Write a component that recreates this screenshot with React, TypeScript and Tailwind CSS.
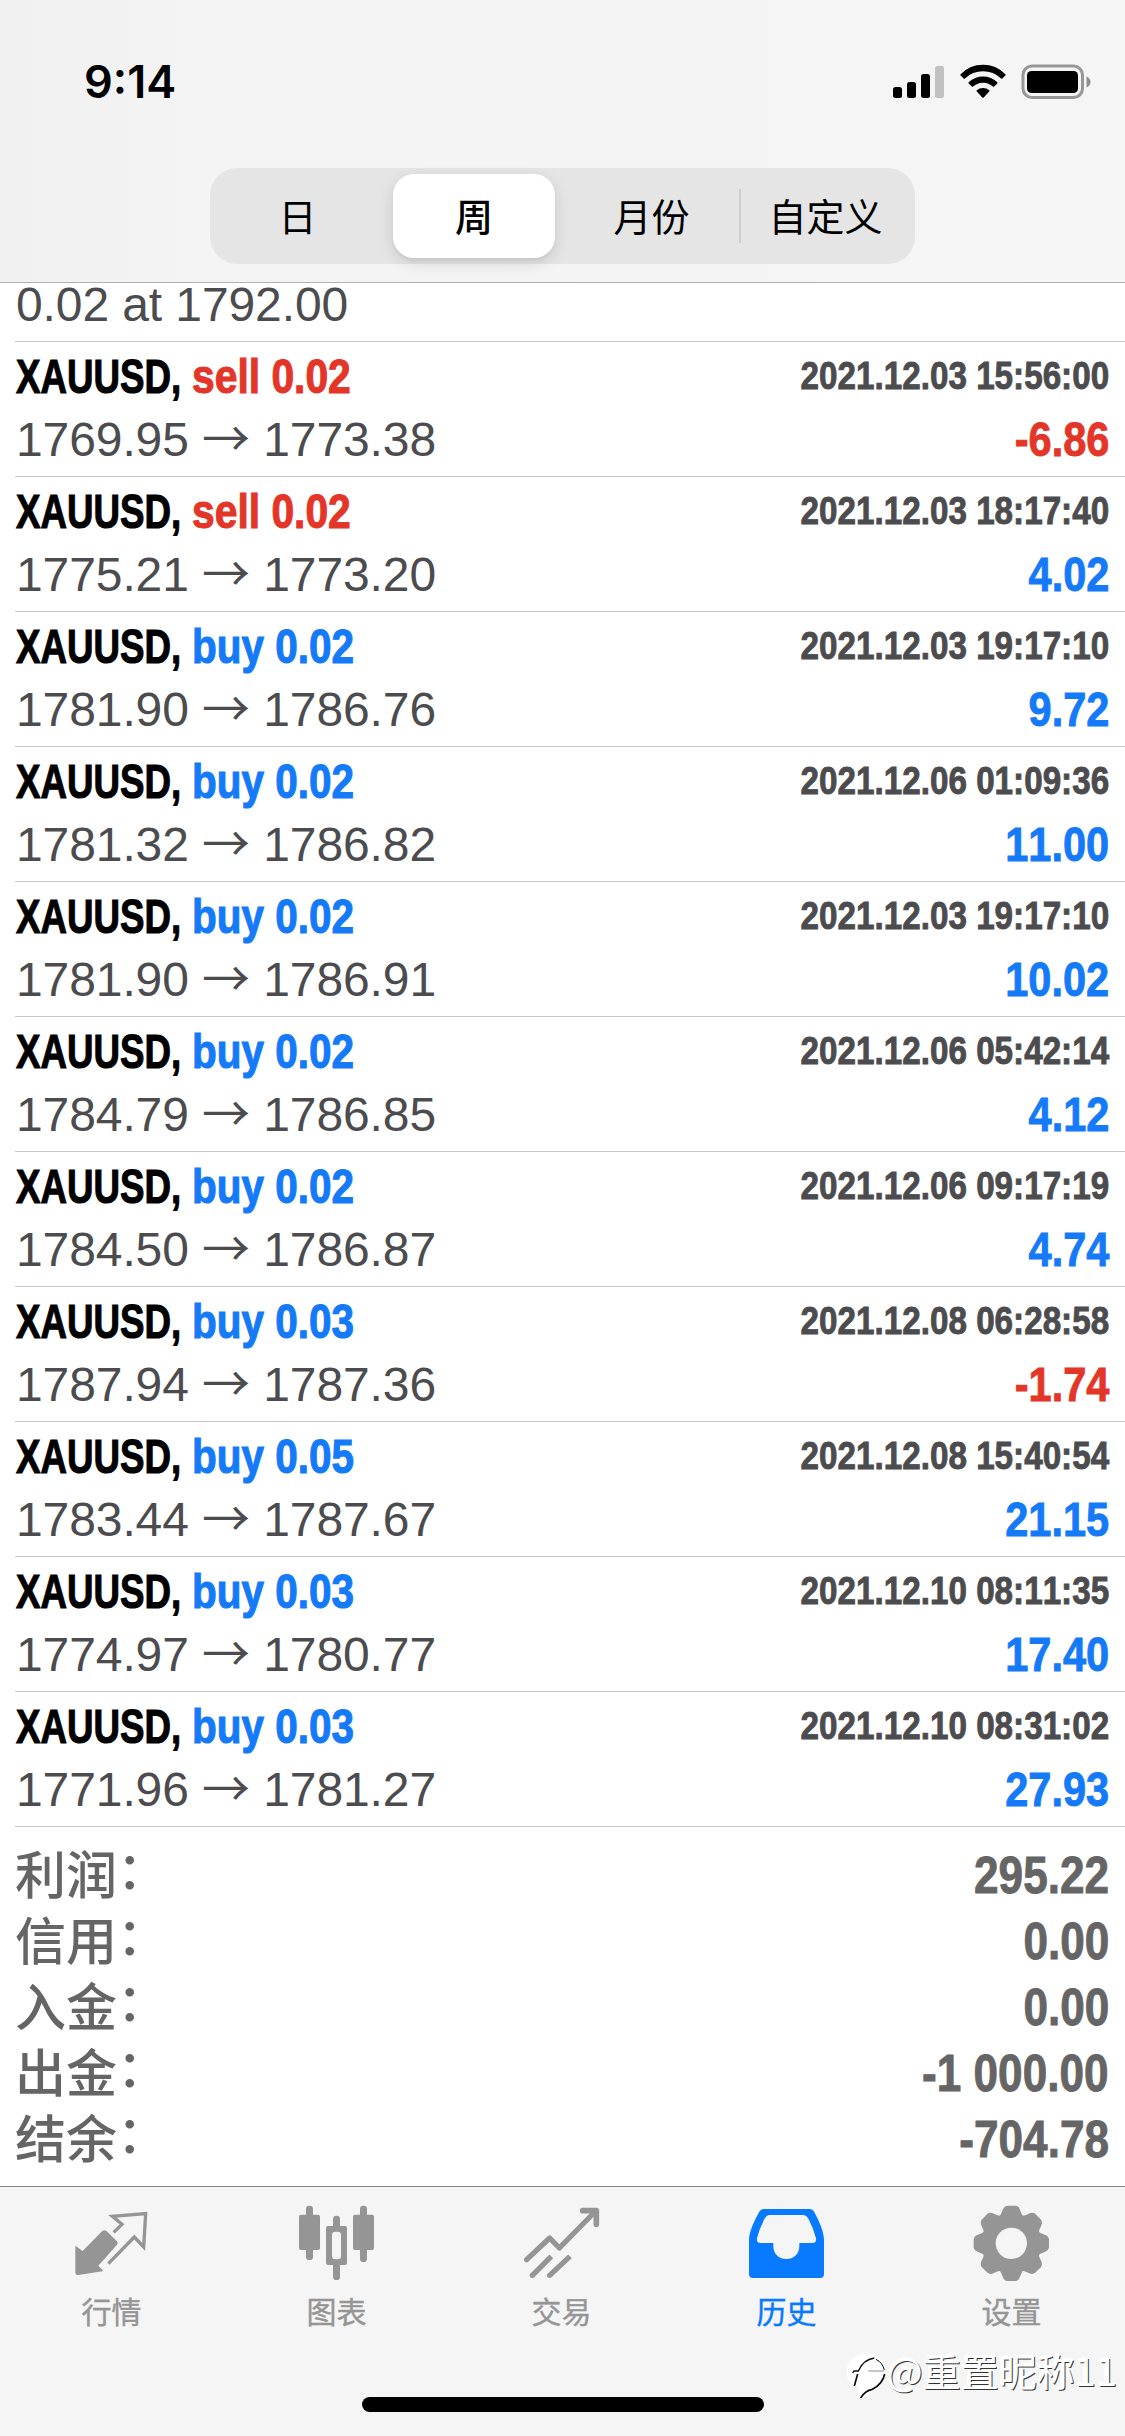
import React from 'react';
import { clsx } from 'clsx';

type Side = 'buy' | 'sell';

interface Deal {
  side: Side;
  volume: string;
  open: string;
  close: string;
  time: string;
  profit: string;
}

const DEALS: Deal[] = [
  { side: 'sell', volume: '0.02', open: '1769.95', close: '1773.38', time: '2021.12.03 15:56:00', profit: '-6.86' },
  { side: 'sell', volume: '0.02', open: '1775.21', close: '1773.20', time: '2021.12.03 18:17:40', profit: '4.02' },
  { side: 'buy', volume: '0.02', open: '1781.90', close: '1786.76', time: '2021.12.03 19:17:10', profit: '9.72' },
  { side: 'buy', volume: '0.02', open: '1781.32', close: '1786.82', time: '2021.12.06 01:09:36', profit: '11.00' },
  { side: 'buy', volume: '0.02', open: '1781.90', close: '1786.91', time: '2021.12.03 19:17:10', profit: '10.02' },
  { side: 'buy', volume: '0.02', open: '1784.79', close: '1786.85', time: '2021.12.06 05:42:14', profit: '4.12' },
  { side: 'buy', volume: '0.02', open: '1784.50', close: '1786.87', time: '2021.12.06 09:17:19', profit: '4.74' },
  { side: 'buy', volume: '0.03', open: '1787.94', close: '1787.36', time: '2021.12.08 06:28:58', profit: '-1.74' },
  { side: 'buy', volume: '0.05', open: '1783.44', close: '1787.67', time: '2021.12.08 15:40:54', profit: '21.15' },
  { side: 'buy', volume: '0.03', open: '1774.97', close: '1780.77', time: '2021.12.10 08:11:35', profit: '17.40' },
  { side: 'buy', volume: '0.03', open: '1771.96', close: '1781.27', time: '2021.12.10 08:31:02', profit: '27.93' },
];

const SUMMARY = [
  { label: '利润', value: '295.22' },
  { label: '信用', value: '0.00' },
  { label: '入金', value: '0.00' },
  { label: '出金', value: '-1 000.00' },
  { label: '结余', value: '-704.78' },
];

const PERIODS = ['日', '周', '月份', '自定义'];

function StatusBar() {
  return (
    <div className="flex h-[168px] items-start justify-between pl-[84px] pr-[33px] pt-[56px]">
      <span className="font-['Inter'] text-[45px] font-semibold leading-[52px] text-black">9:14</span>
      <div className="flex pt-[8px]">
        <svg className="h-[36px] w-[52px]" viewBox="0 0 52 36">
          <rect x="0" y="23" width="9" height="11" rx="2.5" />
          <rect x="14" y="18" width="9" height="16" rx="2.5" />
          <rect x="28" y="10" width="9" height="24" rx="2.5" />
          <rect x="42" y="2" width="9" height="32" rx="2.5" fill="#c1c1c1" />
        </svg>
        <svg className="ml-[15px] h-[36px] w-[46px]" viewBox="0 0 46 36">
          <path d="M0.6 10.2 Q10 0.8 23 0.8 Q36 0.8 45.4 10.2 Q46 10.8 45.4 11.4 L42.4 14.4 Q41.8 15 41.1 14.4 Q33.5 7.2 23 7.2 Q12.5 7.2 4.9 14.4 Q4.2 15 3.6 14.4 L0.6 11.4 Q0 10.8 0.6 10.2 Z" />
          <path d="M8.7 18.2 Q14.7 12.4 23 12.4 Q31.3 12.4 37.3 18.2 Q37.9 18.8 37.3 19.4 L34.2 22.5 Q33.6 23.1 32.9 22.5 Q28.7 18.7 23 18.7 Q17.3 18.7 13.1 22.5 Q12.4 23.1 11.8 22.5 L8.7 19.4 Q8.1 18.8 8.7 18.2 Z" />
          <path d="M16.8 26.3 Q19.4 24 23 24 Q26.6 24 29.2 26.3 Q29.8 26.9 29.2 27.5 L23.7 33.5 Q23 34.2 22.3 33.5 L16.8 27.5 Q16.2 26.9 16.8 26.3 Z" />
        </svg>
        <svg className="ml-[15px] h-[36px] w-[71px]" viewBox="0 0 71 36">
          <rect x="2" y="2" width="59.5" height="31.5" rx="9" fill="none" stroke="#979797" strokeWidth="3" />
          <rect x="6" y="7" width="51" height="22" rx="4.5" />
          <path d="M65.5 12.5 Q69.5 14.5 69.5 18 Q69.5 21.5 65.5 23.5 Z" fill="#8e8e8e" />
        </svg>
      </div>
    </div>
  );
}

function PeriodSwitch({ active }: { active: string }) {
  return (
    <div className="ml-[210px] flex h-[96px] w-[705px] rounded-[27px] bg-[#e5e5e6] py-[6px] font-['Noto_Sans_CJK_SC',sans-serif]">
      {PERIODS.map((period) => (
        <div key={period} className={clsx('relative flex w-[176px] px-[7px]', period === '月份' && 'pl-[11px]')}>
          {period === '自定义' && <div className="absolute left-[1px] top-[15px] h-[54px] w-[2px] bg-[#cfcfd1]" />}
          <button
            className={clsx(
              'flex flex-1 items-center justify-center whitespace-nowrap pb-[3px] text-[38px] leading-none text-black',
              period === active
                ? 'rounded-[21px] bg-white font-medium shadow-[0_5px_16px_rgba(0,0,0,0.12),0_3px_3px_rgba(0,0,0,0.04)]'
                : 'pr-[1px]',
            )}
          >
            {period}
          </button>
        </div>
      ))}
    </div>
  );
}

function DealRow({ deal }: { deal: Deal }) {
  const loss = deal.profit.startsWith('-');
  return (
    <div className="ml-[15px] flex h-[135px] justify-between border-b border-[#c6c6c8] pr-[16px]">
      <div className="whitespace-nowrap">
        <div className="flex pl-px text-[48px] font-bold leading-[69px] [-webkit-text-stroke:1.1px_currentColor]">
          <span className="w-[176px] origin-left scale-x-[0.765] text-black">XAUUSD,</span>
          <span
            className={clsx(
              'origin-left',
              deal.side === 'sell' ? 'scale-x-[0.85] text-[#e33629]' : 'scale-x-[0.843] text-[#147af8]',
            )}
          >
            {deal.side} {deal.volume}
          </span>
        </div>
        <div className="pl-px text-[48px] leading-[57px] tracking-[-0.1px] text-[#4c4c4f]">
          {deal.open} <span className="font-['Noto_Sans_CJK_SC',sans-serif] leading-none">→</span> {deal.close}
        </div>
      </div>
      <div className="flex flex-col items-end whitespace-nowrap font-bold [-webkit-text-stroke:0.9px_currentColor] [font-kerning:none]">
        <div className="h-[69px] origin-right scale-x-[0.852] text-[39px] leading-[67px] text-[#4c4c4f]">{deal.time}</div>
        <div
          className={clsx(
            'origin-right scale-x-[0.865] text-[48px] leading-[57px]',
            loss ? 'text-[#e33629]' : 'text-[#147af8]',
          )}
        >
          {deal.profit}
        </div>
      </div>
    </div>
  );
}

function Summary() {
  return (
    <div className="h-[359px] pl-[15px] pr-[16px] pt-[16px] text-[#656565]">
      {SUMMARY.map((row) => (
        <div key={row.label} className="flex h-[66px] justify-between whitespace-nowrap text-[51px] leading-[66px]">
          <span className="flex font-['Noto_Sans_CJK_SC',sans-serif] font-medium leading-[58px]">
            {row.label}
            <span className="leading-[49px]">：</span>
          </span>
          <span className="origin-right scale-x-[0.865] font-bold [-webkit-text-stroke:0.9px_currentColor]">{row.value}</span>
        </div>
      ))}
    </div>
  );
}

function QuotesIcon() {
  return (
    <>
      <path d="M116 82 L141 58 L112 34 L212 26 L206 126 L178 96 L100 176" fill="none" stroke="currentColor" strokeWidth="10" />
      <path d="M1 122 L23 138 L81 79 Q88 72 95 79 L126 109 Q130 114 126 119 L70 182 L83 195 L82 199 L10 210 Q1 211 1 202 Z" />
    </>
  );
}

function ChartIcon() {
  return (
    <>
      <rect x="-3" y="29" width="63" height="106" rx="6" />
      <rect x="18" y="2" width="21" height="163" rx="10" />
      <rect x="159" y="29" width="63" height="106" rx="6" />
      <rect x="180" y="2" width="21" height="169" rx="10" />
      <rect x="78" y="63" width="63" height="117" rx="6" />
      <rect x="99" y="32" width="21" height="193" rx="10" />
      <rect x="96" y="80" width="27" height="83" rx="10" fill="#f5f5f5" />
    </>
  );
}

function TradeIcon() {
  return (
    <>
      <g fill="none" stroke="currentColor" strokeWidth="16">
        <path d="M5 164 L74 99 L103 129 L212 18" strokeLinecap="round" strokeLinejoin="round" />
        <path d="M173 17 H214 V58" strokeWidth="17" strokeLinecap="round" strokeLinejoin="round" />
        <path d="M22 211 L79 154 M74 211 L135 154" />
      </g>
      <circle cx="22" cy="211" r="8" />
      <circle cx="74" cy="211" r="8" />
    </>
  );
}

function HistoryIcon() {
  return (
    <path
      fillRule="evenodd"
      d="M42 12 H178 Q188 12 193 22 C208 50 222 80 222 105 V207 Q222 219 210 219 H9 Q-3 219 -3 207 V105 C-3 80 12 50 27 22 Q32 12 42 12 Z M60 30 Q49 30 43 43 Q28 70 21 100 Q19 114 32 114 H70 V123 C70 148 87 162 109 162 C131 162 148 148 148 123 V114 H188 Q200 114 198 100 Q190 70 176 43 Q170 30 158 30 Z"
    />
  );
}

function SettingsIcon() {
  return (
    <g transform="translate(109 115)">
      <circle r="88" />
      {[0, 45, 90, 135, 180, 225, 270, 315].map((angle) => (
        <path
          key={angle}
          transform={`rotate(${angle})`}
          d="M-38 -78 Q-30 -86 -26 -100 Q-22 -112 -12 -113 H12 Q22 -112 26 -100 Q30 -86 38 -78 Z"
        />
      ))}
      <circle r="47" fill="#f5f5f5" />
    </g>
  );
}

const TABS = [
  { label: '行情', Icon: QuotesIcon },
  { label: '图表', Icon: ChartIcon },
  { label: '交易', Icon: TradeIcon },
  { label: '历史', Icon: HistoryIcon },
  { label: '设置', Icon: SettingsIcon },
];

function TabBar({ active }: { active: string }) {
  return (
    <nav className="flex h-[250px] flex-col items-center border-t border-[#868686] bg-[#f5f5f5]">
      <div className="grid h-[210px] w-full grid-cols-5 pt-[18px]">
        {TABS.map(({ label, Icon }) => (
          <div
            key={label}
            className={clsx('flex flex-col items-center', label === active ? 'text-[#087aff]' : 'text-[#959595]')}
          >
            <svg className="h-[78px] w-[75px] overflow-visible" viewBox="0 0 225 234" fill="currentColor">
              <Icon />
            </svg>
            <span className="mt-[6px] pr-[2px] font-['Noto_Sans_CJK_SC',sans-serif] text-[30px] leading-[42px] [-webkit-text-stroke:0.4px_currentColor]">
              {label}
            </span>
          </div>
        ))}
      </div>
      <div className="h-[15px] w-[402px] rounded-full bg-black" />
    </nav>
  );
}

function Watermark() {
  return (
    <div className="absolute bottom-[38px] right-[8px] flex items-start">
      <svg className="h-[46px] w-[42px]" viewBox="0 0 126 138">
        <path d="M62 5 C30 5 5 27 5 60 C5 82 18 98 40 106 L46 140 C85 125 118 95 121 58 C121 28 95 5 62 5 Z" fill="#fff" />
        <g fill="none" stroke="#0a0a0a">
          <path d="M23 63 L27 57 H40 Q54 23 88 18" strokeWidth="4" />
          <path d="M38 66 L28 102" strokeWidth="5" />
          <path d="M70 57 H117" strokeWidth="2" stroke="#555" />
          <path d="M93 22 Q113 32 118 54" strokeWidth="3" />
          <path d="M119 66 Q113 96 82 112 Q60 116 47 138" strokeWidth="5" />
        </g>
      </svg>
      <span className="font-['Noto_Sans_CJK_SC',sans-serif] text-[38px] leading-[36px] text-white [text-shadow:1px_1px_0_#333,-1px_-1px_0_#fff]">
        @重置昵称11
      </span>
    </div>
  );
}

export default function App() {
  return (
    <div className="relative h-[2436px] w-[1125px] overflow-hidden bg-white font-['Liberation_Sans',Arial,sans-serif]">
      <header className="h-[283px] border-b border-[#b2b2b2] bg-[#f5f5f5] bg-linear-to-r from-[#f1f1f2] via-[#f5f4f4] via-20% to-[#f5f5f5]">
        <StatusBar />
        <PeriodSwitch active="周" />
      </header>

      <main>
        {/* Tail of the deal scrolled under the header */}
        <div className="ml-[15px] h-[59px] border-b border-[#c6c6c8] pl-px text-[48px] leading-[43px] tracking-[-0.1px] text-[#4c4c4f]">
          0.02 at 1792.00
        </div>
        {DEALS.map((deal, i) => (
          <DealRow key={i} deal={deal} />
        ))}
        <Summary />
      </main>

      <TabBar active="历史" />
      <Watermark />
    </div>
  );
}
